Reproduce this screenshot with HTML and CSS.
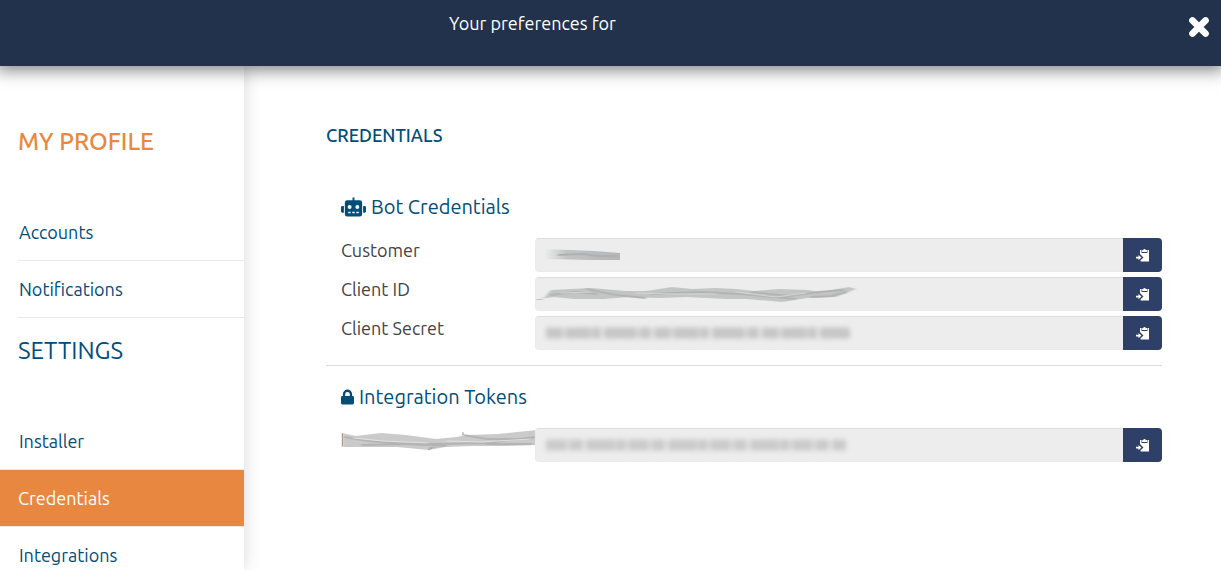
FILE: index.html
```html
<!DOCTYPE html>
<html lang="en">
<head>
<meta charset="utf-8">
<title>Your preferences</title>
<meta name="viewport" content="width=device-width, initial-scale=1">
<link rel="stylesheet" href="styles.css">
</head>
<body>
<svg class="defs" width="0" height="0" aria-hidden="true">
  <defs>
    <filter id="soft" filterUnits="userSpaceOnUse" x="0" y="0" width="330" height="32"><feGaussianBlur stdDeviation="1.6 0.6"/></filter>
    <filter id="blur" filterUnits="userSpaceOnUse" x="0" y="0" width="330" height="32"><feGaussianBlur stdDeviation="2.4"/></filter>
    <symbol id="copy" viewBox="0 0 14 14">
      <path fill="#fff" d="M4 2h1.500v3h6V2H13v11.600H4.600V12.200l2.900-2.700L4 6z"/>
      <path fill="#fff" d="M6.200 3.900V2H7.200a1.400 1.400 0 0 1 2.600 0H11v1.900z"/>
      <path fill="#fff" d="M0 8.700h2.500V7L5.500 9.600l-3 2.600v-1.700H0z"/>
    </symbol>
  </defs>
</svg>
<header class="topbar">
  <h1 class="topbar-title">Your preferences for</h1>
  <button class="close" type="button" aria-label="Close">
    <svg width="22" height="22" viewBox="0 0 22 22" aria-hidden="true"><path d="M4.400 4.400l13.200 13.200M17.600 4.400L4.400 17.600" stroke="#fff" stroke-width="6.500" stroke-linecap="round"/></svg>
  </button>
</header>
<div class="layout">
  <nav class="sidebar" aria-label="Preferences">
    <h2 class="group group-active">MY PROFILE</h2>
    <ul class="menu">
      <li class="item"><a href="#accounts">Accounts</a></li>
      <li class="item"><a href="#notifications">Notifications</a></li>
    </ul>
    <h2 class="group group-settings">SETTINGS</h2>
    <ul class="menu">
      <li class="item item-full"><a href="#installer">Installer</a></li>
      <li class="item item-full item-active"><a href="#credentials" aria-current="page">Credentials</a></li>
      <li class="item item-full"><a href="#integrations">Integrations</a></li>
    </ul>
  </nav>
  <main class="content">
    <h2 class="page-title">CREDENTIALS</h2>
    <section class="section">
      <h3 class="section-title">
        <svg width="25" height="20" viewBox="0 0 26 20" aria-hidden="true">
          <path fill="#004d7a" fill-rule="evenodd" d="M12 0h2v3h5.500A2.500 2.500 0 0 1 22 5.500v12a2.500 2.500 0 0 1-2.500 2.500h-13A2.500 2.500 0 0 1 4 17.500v-12A2.500 2.500 0 0 1 6.500 3H12zM9 8a2 2 0 1 0 0 4 2 2 0 0 0 0-4zM17 8a2 2 0 1 0 0 4 2 2 0 0 0 0-4zM7.500 15v1.500H10V15zM11.800 15v1.500h2.500V15zM16 15v1.500h2.500V15zM1.500 9H3v7H1.500A1.500 1.500 0 0 1 0 14.500v-4A1.500 1.500 0 0 1 1.500 9zM23 9h1.500a1.500 1.500 0 0 1 1.500 1.500v4a1.500 1.500 0 0 1-1.500 1.500H23z"/>
        </svg>
        Bot Credentials
      </h3>
      <div class="row">
        <label class="label" for="customer">Customer</label>
        <div class="field">
          <input class="input" id="customer" type="text" readonly>
          <svg class="mask" width="330" height="32" viewBox="0 0 330 32" aria-hidden="true">
            <defs><linearGradient id="fade"><stop offset="0" stop-color="#c4c5c5" stop-opacity="0"/><stop offset=".3" stop-color="#c2c4c4"/><stop offset="1" stop-color="#b3b7b6"/></linearGradient></defs>
            <path fill="url(#fade)" d="M8 10l26 1 24 1 26 2v7l-30 0-44-1z"/>
            <path filter="url(#soft)" fill="none" stroke="#aeb1b1" stroke-width="2" d="M22 16l25-1 14 2 20 0"/>
          </svg>
          <button class="copy" type="button" aria-label="Copy customer"><svg width="14" height="14" aria-hidden="true"><use href="#copy"/></svg></button>
        </div>
      </div>
      <div class="row">
        <label class="label" for="client-id">Client ID</label>
        <div class="field">
          <input class="input" id="client-id" type="text" readonly>
          <svg class="mask" width="330" height="32" viewBox="0 0 330 32" aria-hidden="true">
            <g filter="url(#soft)">
              <path fill="#c3c5c5" d="M6 22l9-10 40-2 35 3 20 0 26-4 20 2 24-1 20 1 18 2 25-2 30 1 10 2 30-5 7 2-20 8-29 1-25 4-35-3-20 0-40-2-28 1-30-1-25 2-30 0-20-2-24 3z"/>
              <path fill="none" stroke="#b2b4b4" stroke-width="2" d="M14 17l25-3 22 2M50 11l30 6 30 3M115 16l50-2 40 2 55 5M215 14l38 4 30-4 25-2M275 19l20-1 16-4"/>
              <path fill="none" stroke="#d4d6d6" d="M24 15l30-1M100 15l30 1 50 0M200 14l40 5 30-4"/>
            </g>
          </svg>
          <button class="copy" type="button" aria-label="Copy client ID"><svg width="14" height="14" aria-hidden="true"><use href="#copy"/></svg></button>
        </div>
      </div>
      <div class="row">
        <label class="label" for="client-secret">Client Secret</label>
        <div class="field">
          <input class="input" id="client-secret" type="text" readonly>
          <svg class="mask" width="330" height="32" viewBox="0 0 330 32" aria-hidden="true">
            <path filter="url(#blur)" stroke="#c6c6c6" stroke-width="11" stroke-dasharray="17 2 26 1 9 3 33 2 12 3" d="M10 16h304"/>
          </svg>
          <button class="copy" type="button" aria-label="Copy client secret"><svg width="14" height="14" aria-hidden="true"><use href="#copy"/></svg></button>
        </div>
      </div>
    </section>
    <section class="section section-ruled">
      <h3 class="section-title">
        <svg width="13" height="16" viewBox="0 0 14 16" aria-hidden="true"><path fill="#004d7a" fill-rule="evenodd" d="M2 7V5a5 5 0 0 1 10 0v2h.500A1.500 1.500 0 0 1 14 8.500v6a1.500 1.500 0 0 1-1.500 1.500h-11A1.500 1.500 0 0 1 0 14.500v-6A1.500 1.500 0 0 1 1.500 7zM4.500 7h5V5a2.500 2.500 0 0 0-5 0z"/></svg>
        Integration Tokens
      </h3>
      <div class="row">
        <div class="label">
          <svg class="smear" width="196" height="26" viewBox="0 0 196 26" aria-hidden="true">
            <g filter="url(#soft)">
              <path fill="#cacaca" d="M1 5l14 3 25-3 25 2 30 4 20-2 12-2 30-1 39-4v15l-30 1-34 0-28 1-16 3-32-3-55 0z"/>
              <path fill="none" stroke="#b4b4b4" stroke-width="2" d="M3 9l24 4 28 2 45 1 45-1 50-6M20 17l45-1 40 2M88 20l18-4 25-1M122 7l24 4 45 0M145 16l46 0"/>
              <path fill="none" stroke="#e2e2e2" d="M12 10l30 3 45 2M105 13l35 1 50-3"/>
            </g>
            <path stroke="#a89a90" d="M1.500 5v13M87 22l4-2M122 4v3"/>
          </svg>
        </div>
        <div class="field">
          <input class="input" type="text" aria-label="Integration token" readonly>
          <svg class="mask" width="330" height="32" viewBox="0 0 330 32" aria-hidden="true">
            <path filter="url(#blur)" stroke="#cacaca" stroke-width="11" stroke-dasharray="21 2 14 3 29 1 10 2" d="M10 16h300"/>
          </svg>
          <button class="copy" type="button" aria-label="Copy integration token"><svg width="14" height="14" aria-hidden="true"><use href="#copy"/></svg></button>
        </div>
      </div>
    </section>
  </main>
</div>
</body>
</html>
```
FILE: styles.css
```css
* { box-sizing: border-box; }

body {
  margin: 0;
  height: 100vh;
  display: flex;
  flex-direction: column;
  overflow: hidden;
  background: #fff;
  color: #444;
  font-family: Ubuntu, "Noto Sans", sans-serif;
  font-size: 18px;
  line-height: 24px;
}

h1, h2, h3, ul { margin: 0; padding: 0; font-weight: 400; }
button { padding: 0; border: 0; cursor: pointer; }
.defs { position: absolute; }

.topbar {
  position: relative;
  z-index: 2;
  flex: none;
  display: flex;
  align-items: flex-start;
  justify-content: space-between;
  height: 66px;
  padding: 11px 11px 0 449px;
  background: #22324c;
  box-shadow: 0 0 16px 4px rgba(0, 0, 0, 0.5);
  color: #fff;
}
.topbar-title { font-size: 18px; }
.close { display: flex; margin-top: 5px; background: none; }

.layout { flex: 1; display: flex; min-height: 0; }

.sidebar {
  flex: none;
  width: 244px;
  overflow: hidden;
  background: #fff;
  box-shadow: 0 0 16px rgba(0, 0, 0, 0.16);
}
.group {
  padding: 60px 0 47px 18px;
  color: #004d7a;
  font-size: 24px;
  line-height: 31px;
}
.group-active { color: #e88840; font-weight: 500; }
.group-settings { padding-top: 17px; }
.menu { list-style: none; }
.item { margin-left: 18px; border-bottom: 1px solid #e9e9e9; }
.item a {
  display: block;
  padding: 16px 0 16px 1px;
  color: #004d7a;
  text-decoration: none;
}
.item-full { margin-left: 0; }
.item-full a { padding-left: 19px; }
.item-active a { padding-left: 18px; background: #e88840; color: #fff; }

.content { flex: 1; min-width: 0; padding: 57px 59px 0 82px; }
.page-title {
  margin-bottom: 47px;
  color: #004d7a;
  font-size: 18px;
  font-weight: 500;
}
.section { padding-left: 15px; }
.section-ruled {
  margin-top: 15px;
  padding-top: 18px;
  border-top: 1px solid #ddd;
}
.section-title {
  display: flex;
  align-items: center;
  gap: 5px;
  margin-bottom: 18px;
  color: #004d7a;
  font-size: 20px;
  line-height: 26px;
}
.row { display: flex; align-items: flex-start; }
.row + .row { margin-top: 5px; }
.label { flex: none; width: 194px; }
.smear { display: block; }
.field { position: relative; flex: 1; display: flex; height: 34px; }
.input {
  flex: 1;
  min-width: 0;
  padding: 0 10px;
  border: 1px solid #ebebeb;
  border-top-color: #dedede;
  border-right: 0;
  border-radius: 4px 0 0 4px;
  background: #ededed;
  font: inherit;
}
.mask { position: absolute; top: 1px; left: 1px; pointer-events: none; }
.copy {
  display: flex;
  align-items: center;
  justify-content: center;
  width: 39px;
  border-radius: 0 4px 4px 0;
  background: #2f4068;
}
```
